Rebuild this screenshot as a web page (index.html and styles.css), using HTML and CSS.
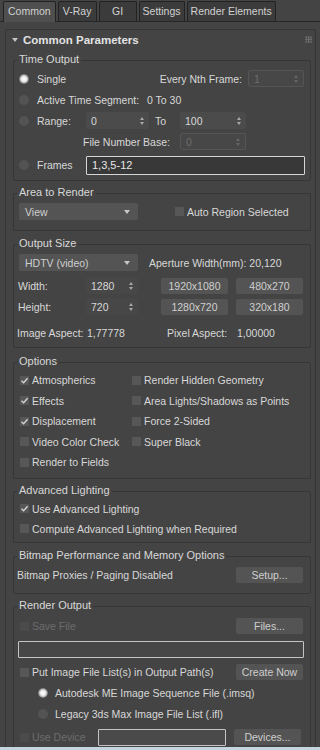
FILE: index.html
```html
<!DOCTYPE html>
<html lang="en">
<head>
    <meta charset="UTF-8">
    <meta name="viewport" content="width=device-width, initial-scale=1.0">
    <title>Render Setup - Common</title>
    <link rel="stylesheet" href="styles.css">
</head>
<body>
<div class="app">
    <!-- tab strip -->
    <div class="tabs">
        <div class="tab active">Common</div>
        <div class="tab">V-Ray</div>
        <div class="tab tab-gi">GI</div>
        <div class="tab">Settings</div>
        <div class="tab">Render Elements</div>
    </div>

    <div class="main">
        <div class="rollout">
            <div class="rollout-head">
                <svg class="tri" width="6" height="4" viewBox="0 0 6 4"><path d="M0 0H6L3 4Z" fill="#c4c4c4"/></svg>
                <span>Common Parameters</span>
                <span class="grip"></span>
            </div>

            <div class="rollout-body">
                <!-- Time Output -->
                <div class="group g-time">
                    <div class="group-title"><span>Time Output</span></div>
                    <div class="group-box">
                        <div class="row">
                            <span class="radio on"></span>
                            <span class="rtext">Single</span>
                            <span class="grow"></span>
                            <span>Every Nth Frame:</span>
                            <div class="spin dis w-nth"><span>1</span><span class="arr"></span></div>
                        </div>
                        <div class="row">
                            <span class="radio"></span>
                            <span class="rtext w-ats">Active Time Segment:</span>
                            <span>0 To 30</span>
                        </div>
                        <div class="row">
                            <span class="radio"></span>
                            <span class="rtext w-range">Range:</span>
                            <div class="spin w-from"><span>0</span><span class="arr"></span></div>
                            <span class="to">To</span>
                            <div class="spin w-to"><span>100</span><span class="arr"></span></div>
                        </div>
                        <div class="row">
                            <span class="fnb">File Number Base:</span>
                            <div class="spin dis w-to"><span>0</span><span class="arr"></span></div>
                        </div>
                        <div class="row row-frames">
                            <span class="radio"></span>
                            <span class="rtext w-range">Frames</span>
                            <div class="field frames">1,3,5-12</div>
                        </div>
                    </div>
                </div>

                <!-- Area to Render -->
                <div class="group g-area">
                    <div class="group-title"><span>Area to Render</span></div>
                    <div class="group-box">
                        <div class="row">
                            <div class="drop">View<span class="caret"></span></div>
                            <span class="cb area-cb"></span>
                            <span class="ctext">Auto Region Selected</span>
                        </div>
                    </div>
                </div>

                <!-- Output Size -->
                <div class="group g-size">
                    <div class="group-title"><span>Output Size</span></div>
                    <div class="group-box">
                        <div class="row">
                            <div class="drop">HDTV (video)<span class="caret"></span></div>
                            <span class="aperture">Aperture Width(mm): 20,120</span>
                        </div>
                        <div class="row row-gap">
                            <span class="dim">Width:</span>
                            <div class="spin w-dim"><span>1280</span><span class="arr"></span></div>
                            <div class="btn preset">1920x1080</div>
                            <div class="btn">480x270</div>
                        </div>
                        <div class="row">
                            <span class="dim">Height:</span>
                            <div class="spin w-dim"><span>720</span><span class="arr"></span></div>
                            <div class="btn preset">1280x720</div>
                            <div class="btn">320x180</div>
                        </div>
                        <div class="row row-aspect">
                            <span class="asp-l">Image Aspect:</span>
                            <span class="asp-v">1,77778</span>
                            <span class="pix-l">Pixel Aspect:</span>
                            <span class="pix-v">1,00000</span>
                        </div>
                    </div>
                </div>

                <!-- Options -->
                <div class="group g-opts">
                    <div class="group-title"><span>Options</span></div>
                    <div class="group-box">
                        <div class="opts">
                            <div class="opt"><span class="cb"><svg viewBox="0 0 9 9"><path d="M1.5 4.8L3.6 6.8L7.6 2.2"/></svg></span><span class="ctext">Atmospherics</span></div>
                            <div class="opt"><span class="cb"></span><span class="ctext">Render Hidden Geometry</span></div>
                            <div class="opt"><span class="cb"><svg viewBox="0 0 9 9"><path d="M1.5 4.8L3.6 6.8L7.6 2.2"/></svg></span><span class="ctext">Effects</span></div>
                            <div class="opt"><span class="cb"></span><span class="ctext">Area Lights/Shadows as Points</span></div>
                            <div class="opt"><span class="cb"><svg viewBox="0 0 9 9"><path d="M1.5 4.8L3.6 6.8L7.6 2.2"/></svg></span><span class="ctext">Displacement</span></div>
                            <div class="opt"><span class="cb"></span><span class="ctext">Force 2-Sided</span></div>
                            <div class="opt"><span class="cb"></span><span class="ctext">Video Color Check</span></div>
                            <div class="opt"><span class="cb"></span><span class="ctext">Super Black</span></div>
                            <div class="opt"><span class="cb"></span><span class="ctext">Render to Fields</span></div>
                        </div>
                    </div>
                </div>

                <!-- Advanced Lighting -->
                <div class="group g-adv">
                    <div class="group-title"><span>Advanced Lighting</span></div>
                    <div class="group-box">
                        <div class="opt"><span class="cb"><svg viewBox="0 0 9 9"><path d="M1.5 4.8L3.6 6.8L7.6 2.2"/></svg></span><span class="ctext">Use Advanced Lighting</span></div>
                        <div class="opt"><span class="cb"></span><span class="ctext">Compute Advanced Lighting when Required</span></div>
                    </div>
                </div>

                <!-- Bitmap Performance -->
                <div class="group g-bmp">
                    <div class="group-title"><span>Bitmap Performance and Memory Options</span></div>
                    <div class="group-box">
                        <div class="row">
                            <span class="bmp-text">Bitmap Proxies / Paging Disabled</span>
                            <span class="grow"></span>
                            <div class="btn">Setup...</div>
                        </div>
                    </div>
                </div>

                <!-- Render Output -->
                <div class="group g-out">
                    <div class="group-title"><span>Render Output</span></div>
                    <div class="group-box">
                        <div class="row">
                            <span class="cb dis"></span>
                            <span class="ctext dis-text">Save File</span>
                            <span class="grow"></span>
                            <div class="btn">Files...</div>
                        </div>
                        <div class="row row-path">
                            <div class="field path"></div>
                        </div>
                        <div class="row row-path">
                            <span class="cb"></span>
                            <span class="ctext">Put Image File List(s) in Output Path(s)</span>
                            <span class="grow"></span>
                            <div class="btn">Create Now</div>
                        </div>
                        <div class="row row-sub">
                            <span class="radio on sub"></span>
                            <span class="rtext">Autodesk ME Image Sequence File (.imsq)</span>
                        </div>
                        <div class="row row-sub row-legacy">
                            <span class="radio sub"></span>
                            <span class="rtext">Legacy 3ds Max Image File List (.ifl)</span>
                        </div>
                        <div class="row row-device">
                            <span class="cb dis"></span>
                            <span class="ctext dis-text dev-label">Use Device</span>
                            <div class="field device"></div>
                            <div class="btn">Devices...</div>
                        </div>
                    </div>
                </div>
            </div>
        </div>
    </div>

    <div class="statusline"></div>
</div>
</body>
</html>
```

FILE: styles.css
```css
body {
    margin: 0;
    background: #444444;
    font-family: 'Liberation Sans', Arial, sans-serif;
    font-size: 10.5px;
    color: #d8d8d8;
}
.app {
    height: 750px;
    display: flex;
    flex-direction: column;
    overflow: hidden;
}

/* tabs */
.tabs {
    flex: none;
    height: 22px;
    box-sizing: border-box;
    display: flex;
    align-items: flex-end;
    gap: 2px;
    padding-left: 3px;
    border-bottom: 1px solid #262626;
}
.tab {
    height: 19px;
    line-height: 19px;
    padding: 0 3px;
    min-width: 31px;
    text-align: center;
    background: #3b3b3b;
    border: 1px solid #222;
    border-bottom: none;
    border-radius: 2px 2px 0 0;
    color: #d2d2d2;
    font-size: 10.5px;
}
.tab.active {
    background: #4f4f4f;
    height: 20px;
    margin-bottom: -1px;
    padding: 0 4px;
}
.tab-gi {
    min-width: 30px;
}

.main {
    flex: 1;
    overflow: hidden;
    padding: 7px 4px 0 5px;
}
.rollout {
    border: 1px solid #363636;
    border-bottom: none;
    border-radius: 3px 3px 0 0;
}
.rollout-head {
    height: 19px;
    display: flex;
    align-items: center;
    padding-left: 6px;
    font-weight: bold;
    font-size: 11.5px;
    color: #e2e2e2;
}
.rollout-head .tri {
    margin-right: 5px;
}
.grip {
    margin-left: auto;
    margin-right: 3px;
    width: 7px;
    height: 7px;
    background-image: radial-gradient(circle, #6e6e6e 0.9px, transparent 1.1px);
    background-size: 2.4px 2.4px;
}
.rollout-body {
    padding: 0 4px 0 7px;
}

/* group boxes */
.group-title {
    height: 14px;
    line-height: 14px;
    padding-left: 4px;
    margin-bottom: -6px;
    font-size: 11px;
}
.group-title span {
    background: #444444;
    padding: 0 2px;
}
.group-box {
    border: 1px solid #363636;
    border-radius: 2px;
}
.g-time { margin-top: 3px; }
.g-time .group-box { padding: 7px 0 4px; }
.g-area { margin-top: 4px; }
.g-area .group-box { padding: 7px 0 8px; }
.g-size { margin-top: 5px; }
.g-size .group-box { padding: 7px 0 4px; }
.g-opts { margin-top: 6px; }
.g-opts .group-box { padding: 7px 0 5px 6px; }
.g-adv { margin-top: 4px; }
.g-adv .group-box { padding: 7px 0 3px 6px; }
.g-bmp { margin-top: 5px; }
.g-bmp .group-box { padding: 8px 0 7px; }
.g-out { margin-top: 4px; }
.g-out .group-box { padding: 9px 0 0; }

.row {
    display: flex;
    align-items: center;
    height: 21px;
}
.grow {
    flex: 1;
}

/* radios */
.radio {
    flex: none;
    width: 10px;
    height: 10px;
    border-radius: 50%;
    background: #535353;
    margin-left: 5px;
}
.radio.on {
    background: radial-gradient(circle, #ffffff 0, #eeeeee 2.5px, #aaaaaa 4px, #6a6a6a 5px);
}
.radio.sub {
    margin-left: 24px;
}
.rtext {
    margin-left: 8px;
}
.row-sub .rtext {
    margin-left: 7px;
}
.w-ats { width: 110px; }
.w-range { width: 49px; }
.to { width: 25px; margin-left: 6px; }
.fnb { margin-left: 69px; width: 97px; }

/* spinners */
.spin {
    flex: none;
    height: 17px;
    box-sizing: border-box;
    display: flex;
    align-items: center;
    padding: 0 5px;
    background: #4b4b4b;
    border-radius: 2px;
    color: #d8d8d8;
}
.spin.dis {
    color: #6e6e6e;
    background: #474747;
    border: 1px solid #555;
}
.arr {
    margin-left: auto;
    display: flex;
    flex-direction: column;
    gap: 2px;
}
.arr::before,
.arr::after {
    content: "";
    border-left: 2px solid transparent;
    border-right: 2px solid transparent;
}
.arr::before { border-bottom: 3px solid #a8a8a8; }
.arr::after { border-top: 3px solid #a8a8a8; }
.spin.dis .arr::before { border-bottom-color: #666; }
.spin.dis .arr::after { border-top-color: #666; }
.w-nth { width: 56px; margin: 0 6px 0 6px; }
.w-from { width: 63px; }
.w-to { width: 66px; }
.w-dim { width: 52px; background: #474747; }

/* text fields */
.field {
    box-sizing: border-box;
    border: 1px solid #c4c4c4;
    border-radius: 1px;
}
.row-frames {
    margin-top: 2px;
    height: 22px;
}
.frames {
    width: 219px;
    height: 19px;
    line-height: 17px;
    padding-left: 5px;
    background: #383838;
    border-color: #d6d6d6;
    color: #e6e6e6;
    font-size: 11px;
}
.path {
    margin-left: 4px;
    width: 286px;
    height: 17px;
    background: #474747;
}
.device {
    width: 128px;
    height: 17px;
    background: #4a4a4a;
}

/* dropdowns and buttons */
.drop {
    flex: none;
    width: 119px;
    height: 17px;
    box-sizing: border-box;
    margin-left: 5px;
    padding: 0 6px;
    display: flex;
    align-items: center;
    background: #545454;
    border-radius: 2px;
    color: #cfcfcf;
}
.caret {
    margin-left: auto;
    margin-right: 2px;
    border-left: 3px solid transparent;
    border-right: 3px solid transparent;
    border-top: 4px solid #c8c8c8;
}
.btn {
    flex: none;
    width: 67px;
    height: 16px;
    line-height: 16px;
    text-align: center;
    background: #545454;
    border-radius: 2px;
    color: #cfcfcf;
    margin-right: 7px;
}
.preset {
    margin-left: 23px;
    margin-right: 8px;
}
.aperture {
    margin-left: 11px;
}
.dim {
    width: 68px;
    margin-left: 4px;
}
.row-gap {
    margin-top: 2px;
}
.row-aspect {
    margin-top: 5px;
}
.asp-l { margin-left: 3px; width: 70px; }
.asp-v { width: 80px; }
.pix-l { width: 70px; }

/* checkboxes */
.cb {
    flex: none;
    width: 9px;
    height: 9px;
    background: #575757;
    display: flex;
}
.cb svg {
    width: 9px;
    height: 9px;
    fill: none;
    stroke: #d2d2d2;
    stroke-width: 1.4;
}
.cb.dis {
    background: #4b4b4b;
    margin-left: 6px;
}
.ctext {
    margin-left: 3px;
}
.dis-text {
    color: #6c6c6c;
}
.area-cb {
    margin-left: 37px;
}
.opts {
    display: grid;
    grid-template-columns: 112px 1fr;
    grid-auto-rows: 20.5px;
}
.opt {
    display: flex;
    align-items: center;
    height: 20.5px;
}
.g-adv .opt {
    height: 20px;
}
.bmp-text {
    margin-left: 3px;
}
.row-path {
    margin-top: 2px;
}
.row-path .cb {
    margin-left: 6px;
}
.row-sub {
    height: 20px;
}
.row-legacy {
    margin-top: 1px;
}
.row-device {
    margin-top: 3px;
}
.dev-label {
    width: 66px;
}
.row-device .btn {
    margin-left: 8px;
}

.statusline {
    flex: none;
    height: 3px;
    background: #c6d4e2;
}
```
